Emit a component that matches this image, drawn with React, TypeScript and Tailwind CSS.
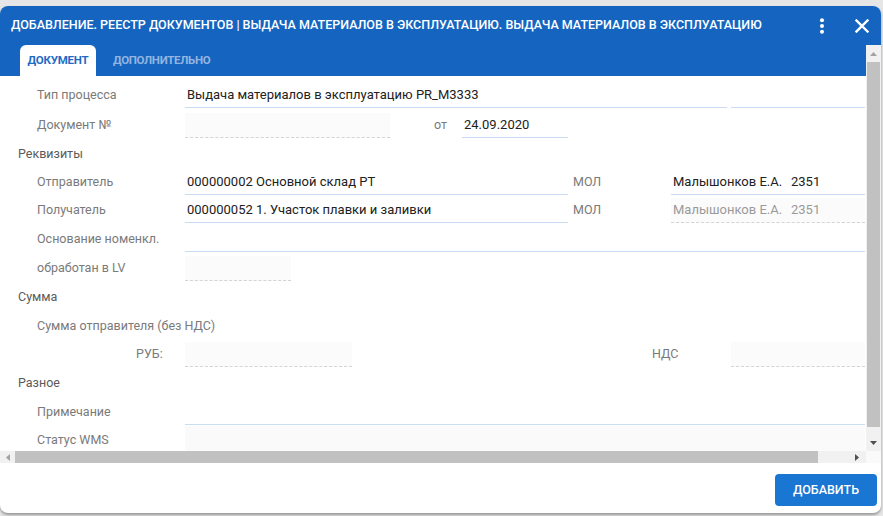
import React from "react";

const F = { fontFamily: "Roboto, 'Noto Sans', Arial, sans-serif" } as React.CSSProperties;

function Label({ children, w = "w-[185px]", cls = "pl-[37px]" }: { children: React.ReactNode; w?: string; cls?: string }) {
  return <div className={`${w} ${cls} shrink-0 text-[12.5px] text-[#7a7a7a] whitespace-nowrap`}>{children}</div>;
}

function Input({ children, w, dis, cls = "" }: { children?: React.ReactNode; w: string; dis?: boolean; cls?: string }) {
  return (
    <div
      className={`${w} ${cls} shrink-0 h-[25px] flex items-center pl-[2px] text-[13px] whitespace-nowrap ${
        dis ? "bg-[#fbfbfb] border-b border-dashed border-[#d4d4d4] text-[#9a9a9a]" : "border-b border-[#cadcf3] text-[#212121]"
      }`}
    >
      {children}
    </div>
  );
}

export default function App() {
  return (
    <div style={F} className="w-[883px] h-[516px] bg-[#e6e6e6] overflow-hidden">
      <div className="mt-[6px] w-[881px] h-[507px] rounded-[8px] bg-white overflow-hidden flex flex-col shadow-[0_2px_3px_rgba(0,0,0,0.35)]">
        {/* title */}
        <div className="h-[39px] shrink-0 bg-[#1565c0] flex items-center pl-[11px] pr-[12px]">
          <div className="flex-1 text-white text-[12.5px] font-medium whitespace-nowrap">
            ДОБАВЛЕНИЕ. РЕЕСТР ДОКУМЕНТОВ | ВЫДАЧА МАТЕРИАЛОВ В ЭКСПЛУАТАЦИЮ. ВЫДАЧА МАТЕРИАЛОВ В ЭКСПЛУАТАЦИЮ
          </div>
          <svg width="6" height="16" viewBox="0 0 6 16" className="mr-[30px]">
            <circle cx="3" cy="2.2" r="2" fill="white" />
            <circle cx="3" cy="8" r="2" fill="white" />
            <circle cx="3" cy="13.8" r="2" fill="white" />
          </svg>
          <svg width="14" height="14" viewBox="0 0 14 14">
            <path d="M1.5 1.5 L12.5 12.5 M12.5 1.5 L1.5 12.5" stroke="white" strokeWidth="2.4" strokeLinecap="square" />
          </svg>
        </div>
        {/* middle */}
        <div className="flex h-[406px] shrink-0">
          <div className="flex-1 flex flex-col min-w-0">
            <div className="h-[31px] shrink-0 bg-[#1565c0] flex items-end pl-[20px]">
              <div className="w-[76px] h-[31px] bg-white rounded-t-[6px] flex items-center justify-center text-[11.5px] font-bold text-[#1e6bc4] tracking-[-0.2px]">
                ДОКУМЕНТ
              </div>
              <div className="h-[31px] flex items-center ml-[17px] text-[11.5px] font-bold text-[#93b4e0] tracking-[-0.3px]">
                ДОПОЛНИТЕЛЬНО
              </div>
            </div>
            <div className="flex-1 min-h-0 overflow-hidden pt-[5px]">
              <div className="h-[29px] flex items-center">
                <Label>Тип процесса</Label>
                <Input w="w-[542px]">Выдача материалов в эксплуатацию PR_M3333</Input>
                <Input w="w-[134px]" cls="ml-[4px]" />
              </div>
              <div className="h-[30px] flex items-center">
                <Label>Документ №</Label>
                <Input w="w-[205px]" dis />
                <div className="w-[72px] shrink-0 text-[12.5px] text-[#7a7a7a] text-right pr-[15px]">от</div>
                <Input w="w-[106px]">24.09.2020</Input>
              </div>
              <div className="h-[28px] flex items-center">
                <Label cls="pl-[18px]">
                  <span className="text-[#5a5a5a]">Реквизиты</span>
                </Label>
              </div>
              <div className="h-[28px] flex items-center">
                <Label>Отправитель</Label>
                <Input w="w-[383px]">000000002 Основной склад РТ</Input>
                <div className="w-[103px] shrink-0 pl-[5px] text-[12.5px] text-[#7a7a7a]">МОЛ</div>
                <Input w="w-[194px]">
                  <span className="w-[118px]">Малышонков Е.А.</span>
                  <span>2351</span>
                </Input>
              </div>
              <div className="h-[29px] flex items-center">
                <Label>Получатель</Label>
                <Input w="w-[383px]">000000052 1. Участок плавки и заливки</Input>
                <div className="w-[103px] shrink-0 pl-[5px] text-[12.5px] text-[#7a7a7a]">МОЛ</div>
                <Input w="w-[194px]" dis>
                  <span className="w-[118px]">Малышонков Е.А.</span>
                  <span>2351</span>
                </Input>
              </div>
              <div className="h-[29px] flex items-center">
                <Label>Основание номенкл.</Label>
                <Input w="w-[680px]" />
              </div>
              <div className="h-[29px] flex items-center">
                <Label>обработан в LV</Label>
                <Input w="w-[106px]" dis />
              </div>
              <div className="h-[29px] flex items-center">
                <Label cls="pl-[18px]">
                  <span className="text-[#5a5a5a]">Сумма</span>
                </Label>
              </div>
              <div className="h-[28px] flex items-center">
                <Label w="w-[300px]">Сумма отправителя (без НДС)</Label>
              </div>
              <div className="h-[29px] flex items-center">
                <div className="w-[185px] shrink-0 pl-[136px] text-[12.5px] text-[#7a7a7a]">РУБ:</div>
                <Input w="w-[167px]" dis />
                <div className="w-[379px] shrink-0 pl-[300px] text-[12.5px] text-[#7a7a7a]">НДС</div>
                <Input w="w-[134px]" dis />
              </div>
              <div className="h-[29px] flex items-center">
                <Label cls="pl-[18px]">
                  <span className="text-[#5a5a5a]">Разное</span>
                </Label>
              </div>
              <div className="h-[28px] flex items-center">
                <Label>Примечание</Label>
                <Input w="w-[680px]" />
              </div>
              <div className="h-[28px] flex items-center">
                <Label>Статус WMS</Label>
                <div className="w-[680px] h-[28px] bg-[#fafafa]" />
              </div>
            </div>
          </div>
          {/* vertical scrollbar */}
          <div className="w-[15px] shrink-0 bg-[#f1f1f1] flex flex-col items-center">
            <div className="h-[17px] w-full flex items-center justify-center">
              <svg width="7" height="4" viewBox="0 0 7 4"><path d="M0 4 L3.5 0 L7 4 Z" fill="#a3a3a3" /></svg>
            </div>
            <div className="w-[13px] h-[365px] bg-[#c1c1c1]" />
            <div className="flex-1" />
            <div className="h-[17px] w-full flex items-center justify-center">
              <svg width="7" height="4" viewBox="0 0 7 4"><path d="M0 0 L7 0 L3.5 4 Z" fill="#505050" /></svg>
            </div>
          </div>
        </div>
        {/* horizontal scrollbar */}
        <div className="h-[12px] shrink-0 flex">
          <div className="flex-1 bg-[#f1f1f1] flex items-center">
            <div className="w-[15px] h-[12px] flex items-center justify-center">
              <svg width="4" height="7" viewBox="0 0 4 7"><path d="M4 0 L4 7 L0 3.5 Z" fill="#a3a3a3" /></svg>
            </div>
            <div className="w-[803px] h-[12px] bg-[#c1c1c1]" />
            <div className="flex-1 h-[12px] flex items-center justify-end pr-[7px]">
              <svg width="4" height="7" viewBox="0 0 4 7"><path d="M0 0 L4 3.5 L0 7 Z" fill="#505050" /></svg>
            </div>
          </div>
          <div className="w-[15px] bg-[#fafafa]" />
        </div>
        {/* footer */}
        <div className="flex-1 flex items-start justify-end pr-[4px] pt-[11px]">
          <div className="w-[102px] h-[32px] rounded-[4px] bg-[#1976d2] flex items-center justify-center text-white text-[12.5px] font-medium">
            ДОБАВИТЬ
          </div>
        </div>
      </div>
    </div>
  );
}
